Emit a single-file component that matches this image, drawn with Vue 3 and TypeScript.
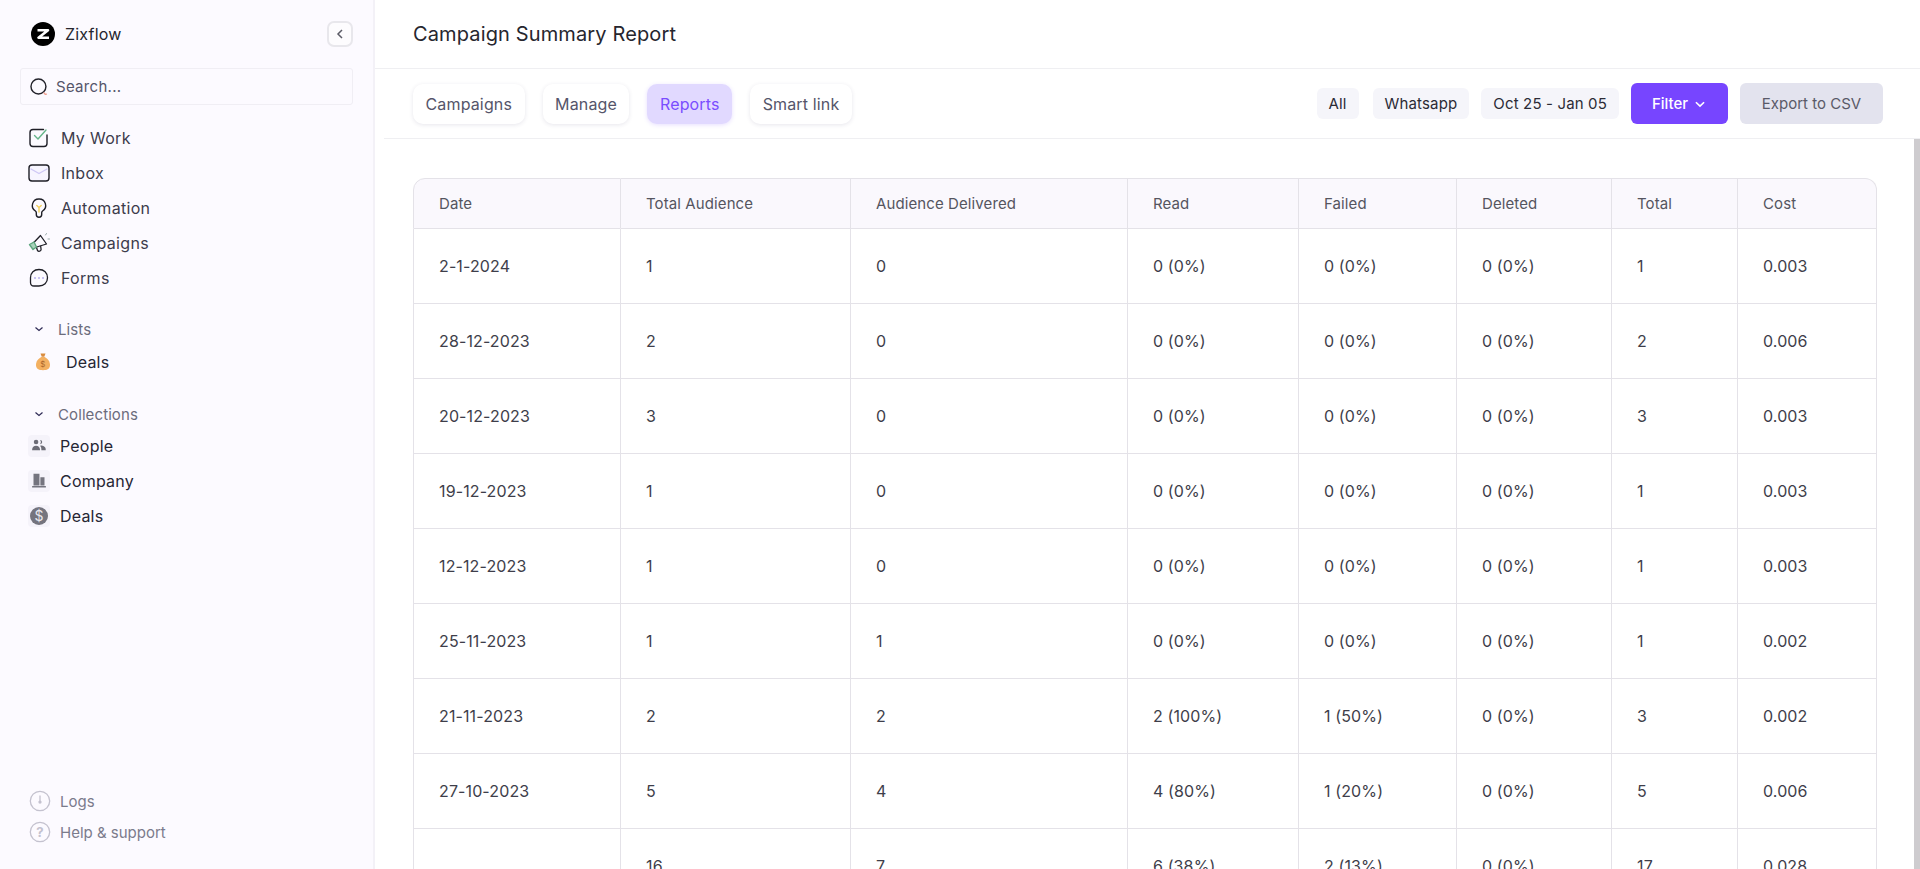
<script setup lang="ts">
interface Shape { d: string; stroke?: string; fill?: string; w?: number }
interface Item { label: string; icon: Shape[] }

const K = '#1f1f27'
const topNav: Item[] = [
  { label: 'My Work', icon: [
    { d: 'M16.500 3.500H6a3 3 0 0 0-3 3v11a3 3 0 0 0 3 3h11a3 3 0 0 0 3-3V9', stroke: K, w: 1.4 },
    { d: 'M7.500 9.500l3.500 3.500 8-9', stroke: '#66b58a', w: 1.4 }
  ] },
  { label: 'Inbox', icon: [
    { d: 'M5 4h14a3 3 0 0 1 3 3v10a3 3 0 0 1-3 3H5a3 3 0 0 1-3-3V7a3 3 0 0 1 3-3z', stroke: K, fill: '#f7f5ff', w: 1.4 },
    { d: 'M4 8l8 4.500L20 8', stroke: '#cfc8f5', w: 1.4 }
  ] },
  { label: 'Automation', icon: [
    { d: 'M12 3a6.500 6.500 0 0 0-3.600 12c.6.5.9 1 .9 1.800v1.700a2.700 2.700 0 0 0 5.400 0v-1.700c0-.8.3-1.300.9-1.800A6.500 6.500 0 0 0 12 3z', stroke: K, w: 1.4 },
    { d: 'M9.800 9.500L12 11.500l2.200-2M12 11.500V16', stroke: '#f2cf5b', w: 1.4 }
  ] },
  { label: 'Campaigns', icon: [
    { d: 'M13.500 4.500l6 8.500-13 4-2-3z', stroke: K, w: 1.3 },
    { d: 'M9.500 16.500l1 3a2 2 0 0 0 3.600-1l-.4-3', stroke: K, w: 1.3 },
    { d: 'M2.500 13.500l4.500-2.500 2.500 5-3.500 2.500z', stroke: '#5fa67f', fill: '#a8d3bb', w: 1.4 },
    { d: 'M18.500 4l1-1.500M21 8h1.500', stroke: '#9aa', w: 1 }
  ] },
  { label: 'Forms', icon: [
    { d: 'M12 3.500c5 0 8.500 3.400 8.500 8.200 0 4.900-3.500 8.300-8.500 8.300H7c-2 0-3.500-1.400-3.500-3.500v-4.800c0-4.800 3.500-8.200 8.500-8.200z', stroke: K, w: 1.3 },
    { d: 'M8 12h.01M12 12h.01M16 12h.01', stroke: '#b9b2ee', w: 2 }
  ] }
]

const collections: Item[] = [
  { label: 'People', icon: [
    { d: 'M6.300 7.700a2.500 2.500 0 1 0 5 0 2.500 2.500 0 0 0-5 0zM13.200 5.400a2.300 2.300 0 1 1 0 4.600 3.500 3.500 0 0 0 0-4.600zM4.500 16c0-2.700 2-4.300 4.300-4.300s4.300 1.600 4.300 4.300v.5h-8.600zM14.200 11.500c2.300 0 5.100 1.300 5.100 4v1h-4.700c0-2-.1-3.700-1.500-4.900z', fill: '#6c6c76' }
  ] },
  { label: 'Company', icon: [
    { d: 'M6 4h6.500v13H6zM13.500 8H18v9h-4.500zM4.500 17.500h15v1.500h-15z', fill: '#74747e' }
  ] },
  { label: 'Deals', icon: [] }
]

const columns = ['Date', 'Total Audience', 'Audience Delivered', 'Read', 'Failed', 'Deleted', 'Total', 'Cost']
const rows: string[][] = [
  ['2-1-2024', '1', '0', '0 (0%)', '0 (0%)', '0 (0%)', '1', '0.003'],
  ['28-12-2023', '2', '0', '0 (0%)', '0 (0%)', '0 (0%)', '2', '0.006'],
  ['20-12-2023', '3', '0', '0 (0%)', '0 (0%)', '0 (0%)', '3', '0.003'],
  ['19-12-2023', '1', '0', '0 (0%)', '0 (0%)', '0 (0%)', '1', '0.003'],
  ['12-12-2023', '1', '0', '0 (0%)', '0 (0%)', '0 (0%)', '1', '0.003'],
  ['25-11-2023', '1', '1', '0 (0%)', '0 (0%)', '0 (0%)', '1', '0.002'],
  ['21-11-2023', '2', '2', '2 (100%)', '1 (50%)', '0 (0%)', '3', '0.002'],
  ['27-10-2023', '5', '4', '4 (80%)', '1 (20%)', '0 (0%)', '5', '0.006'],
  ['', '16', '7', '6 (38%)', '2 (13%)', '0 (0%)', '17', '0.028']
]
const tabs = ['Campaigns', 'Manage', 'Reports', 'Smart link']
const chips = ['All', 'Whatsapp', 'Oct 25 - Jan 05']
</script>

<template>
  <div class="app">
    <aside class="sidebar">
      <div class="brand">
        <svg class="logo" viewBox="0 0 24 24" width="24" height="24">
          <circle cx="12" cy="12" r="12" fill="#000" />
          <path d="M6.500 8.200h10.500l-9.500 7.600H18" fill="none" stroke="#fff" stroke-width="2.600" stroke-linejoin="round" />
        </svg>
        <span class="brand-name">Zixflow</span>
        <button class="collapse" type="button" aria-label="Collapse">
          <svg viewBox="0 0 12 12" width="12" height="12"><path d="M8 2L4 6l4 4" fill="none" stroke="#5b5b66" stroke-width="1.500" /></svg>
        </button>
      </div>

      <div class="search">
        <svg viewBox="0 0 20 20" width="22" height="22">
          <circle cx="9.500" cy="9.500" r="6.800" fill="none" stroke="#23232b" stroke-width="1.300" />
          <path d="M14.500 14.800c.3 1.500 1.500 2.200 2.600 1.500" fill="none" stroke="#f0a090" stroke-width="1.300" />
        </svg>
        <span>Search...</span>
      </div>

      <nav class="top-nav">
        <a v-for="item in topNav" :key="item.label" class="nav-item">
          <svg viewBox="0 0 24 24" width="24" height="24">
            <path v-for="(s, i) in item.icon" :key="i" :d="s.d" :fill="s.fill || 'none'" :stroke="s.stroke || 'none'" :stroke-width="s.w || 1" stroke-linecap="round" stroke-linejoin="round" />
          </svg>
          <span>{{ item.label }}</span>
        </a>
      </nav>

      <div class="section-head first">
        <svg viewBox="0 0 12 12" width="12" height="12"><path d="M2.500 4.500L6 7.500l3.500-3" fill="none" stroke="#2e2a55" stroke-width="1.200" /></svg>
        <span>Lists</span>
      </div>
      <a class="list-item">
        <svg viewBox="0 0 20 20" width="20" height="20">
          <path d="M7.500 1.500h5l-1.200 3.200H8.700z" fill="#d98c3f" />
          <path d="M8.300 5c-3 1.500-5.300 4.600-5.300 8 0 3.600 2.500 5.200 7 5.200s7-1.600 7-5.200c0-3.400-2.300-6.500-5.300-8z" fill="#f3b061" />
          <text x="10" y="15" text-anchor="middle" font-size="8" font-family="Inter, sans-serif" fill="#a8642a">$</text>
        </svg>
        <span>Deals</span>
      </a>

      <div class="section-head second">
        <svg viewBox="0 0 12 12" width="12" height="12"><path d="M2.500 4.500L6 7.500l3.500-3" fill="none" stroke="#2e2a55" stroke-width="1.200" /></svg>
        <span>Collections</span>
      </div>
      <nav class="collections">
        <a v-for="item in collections" :key="item.label" class="collection-item">
          <span class="tile">
            <svg v-if="item.icon.length" viewBox="0 0 24 24" width="22" height="22">
              <path v-for="(s, i) in item.icon" :key="i" :d="s.d" :fill="s.fill" />
            </svg>
            <svg v-else viewBox="0 0 20 20" width="20" height="20">
              <circle cx="10" cy="10" r="9" fill="#74747e" />
              <text x="10" y="15" text-anchor="middle" font-size="14" font-family="Inter, sans-serif" fill="#e8e8ee">$</text>
            </svg>
          </span>
          <span>{{ item.label }}</span>
        </a>
      </nav>

      <div class="foot">
        <a class="foot-item">
          <svg viewBox="0 0 20 20" width="22" height="22">
            <circle cx="10" cy="10" r="8.800" fill="none" stroke="#c4c2cf" stroke-width="1.200" />
            <path d="M10 5v5" stroke="#c4c2cf" stroke-width="1.200" />
            <circle cx="10" cy="11" r="1.500" fill="#c4c2cf" />
          </svg>
          <span>Logs</span>
        </a>
        <a class="foot-item">
          <svg viewBox="0 0 20 20" width="22" height="22">
            <circle cx="10" cy="10" r="8.800" fill="none" stroke="#c4c2cf" stroke-width="1.200" />
            <text x="10" y="14.500" text-anchor="middle" font-size="12" font-weight="700" font-family="Inter, sans-serif" fill="#c4c2cf">?</text>
          </svg>
          <span>Help &amp; support</span>
        </a>
      </div>
    </aside>

    <main class="main">
      <header class="title-bar"><h1>Campaign Summary Report</h1></header>
      <div class="toolbar">
        <div class="tabs">
          <button v-for="t in tabs" :key="t" type="button" class="tab" :class="{ active: t === 'Reports' }">{{ t }}</button>
        </div>
        <div class="actions">
          <span v-for="c in chips" :key="c" class="chip">{{ c }}</span>
          <button type="button" class="filter">
            Filter
            <svg viewBox="0 0 12 12" width="14" height="14"><path d="M2.500 4.500L6 7.800l3.500-3.300" fill="none" stroke="#fff" stroke-width="1.400" /></svg>
          </button>
          <button type="button" class="export">Export to CSV</button>
        </div>
      </div>
      <div class="scroll-wrap">
        <div class="scroll">
          <table class="report">
            <colgroup>
              <col class="c1" /><col class="c2" /><col class="c3" /><col class="c4" />
              <col class="c5" /><col class="c6" /><col class="c7" /><col class="c8" />
            </colgroup>
            <thead>
              <tr><th v-for="c in columns" :key="c">{{ c }}</th></tr>
            </thead>
            <tbody>
              <tr v-for="(r, i) in rows" :key="i">
                <td v-for="(v, j) in r" :key="j">{{ v }}</td>
              </tr>
            </tbody>
          </table>
        </div>
        <div class="scroll-thumb"></div>
      </div>
    </main>
  </div>
</template>

<style>
html, body { margin: 0; height: 100%; overflow: hidden; background: #fff; }
</style>

<style scoped>
.app {
  display: flex;
  height: 869px;
  overflow: hidden;
  font-family: Inter, "Liberation Sans", sans-serif;
  color: #2c2c38;
}
.sidebar {
  width: 375px;
  flex: none;
  box-sizing: border-box;
  display: flex;
  flex-direction: column;
  padding: 0 20px 0 20px;
  background: #fcfaff;
  border-right: 2px solid #f3f1f7;
}
.brand {
  height: 68px;
  display: flex;
  align-items: center;
  padding-left: 11px;
}
.logo { flex: none; }
.brand-name {
  margin-left: 10px;
  font-size: 16px;
  letter-spacing: 0.2px;
  color: #26262e;
}
.collapse {
  margin-left: auto;
  width: 26px;
  height: 26px;
  padding: 0;
  display: flex;
  align-items: center;
  justify-content: center;
  background: #fdfcfe;
  border: 2px solid #e8e7ec;
  border-radius: 7px;
}
.search {
  height: 37px;
  box-sizing: border-box;
  display: flex;
  align-items: center;
  gap: 6px;
  padding-left: 7px;
  border: 1px solid #f0eef4;
  border-radius: 3px;
  font-size: 15px;
  letter-spacing: 0.3px;
  color: #55556a;
}
.top-nav {
  display: flex;
  flex-direction: column;
  margin-top: 15px;
}
.nav-item {
  height: 35px;
  display: flex;
  align-items: center;
  gap: 10px;
  padding-left: 7px;
  font-size: 16px;
  letter-spacing: 0.3px;
  color: #3c3c4c;
}
.section-head {
  height: 20px;
  display: flex;
  align-items: center;
  gap: 13px;
  padding-left: 13px;
  font-size: 15px;
  letter-spacing: 0.1px;
  color: #6c6c7c;
}
.section-head.first { margin-top: 24px; }
.section-head.second { margin-top: 25px; }
.list-item {
  height: 35px;
  margin-top: 5px;
  display: flex;
  align-items: center;
  gap: 13px;
  padding-left: 13px;
  font-size: 16px;
  letter-spacing: 0.2px;
  color: #262634;
}
.collections {
  display: flex;
  flex-direction: column;
  margin-top: 4px;
}
.collection-item {
  height: 35px;
  display: flex;
  align-items: center;
  gap: 10px;
  padding-left: 8px;
  font-size: 16px;
  letter-spacing: 0.2px;
  color: #262634;
}
.tile {
  width: 22px;
  height: 22px;
  display: flex;
  align-items: center;
  justify-content: center;
  background: #f5f3fa;
  border-radius: 4px;
}
.foot {
  margin-top: auto;
  padding-bottom: 27px;
  display: flex;
  flex-direction: column;
  gap: 11px;
}
.foot-item {
  height: 20px;
  display: flex;
  align-items: center;
  gap: 9px;
  padding-left: 9px;
  font-size: 15px;
  color: #7b7b8c;
}
.main {
  flex: 1;
  min-width: 0;
  display: flex;
  flex-direction: column;
  background: #fff;
}
.title-bar {
  height: 69px;
  flex: none;
  box-sizing: border-box;
  display: flex;
  align-items: center;
  padding-left: 38px;
  border-bottom: 1px solid #efeff2;
}
h1 {
  margin: 0;
  font-size: 20px;
  font-weight: 400;
  letter-spacing: 0.13px;
  color: #26262e;
}
.toolbar {
  height: 70px;
  flex: none;
  box-sizing: border-box;
  display: flex;
  align-items: center;
  justify-content: space-between;
  margin-left: 9px;
  padding: 0 37px 0 29px;
  border-bottom: 1px solid #efeff2;
}
.tabs { display: flex; gap: 18px; }
.tab {
  height: 40px;
  padding: 0 12.5px;
  background: #fff;
  border: 0;
  border-radius: 10px;
  box-shadow: 0 1px 4px rgba(60, 50, 100, 0.12);
  font: 16px Inter, "Liberation Sans", sans-serif;
  letter-spacing: 0.15px;
  color: #55556a;
}
.tab.active {
  background: #e1d9ff;
  color: #7a4dff;
  box-shadow: 0 1px 4px rgba(120, 80, 255, 0.18);
}
.actions { display: flex; align-items: center; gap: 12px; }
.chip {
  height: 31px;
  display: flex;
  align-items: center;
  padding: 0 12px;
  background: #f5f5fa;
  border-radius: 6px;
  font-size: 15px;
  letter-spacing: 0.15px;
  color: #2b2b36;
}
.chip:first-child { margin-right: 2px; }
.filter {
  height: 41px;
  width: 97px;
  display: flex;
  align-items: center;
  justify-content: center;
  gap: 5px;
  padding: 0;
  background: #7745ff;
  border: 0;
  border-radius: 6px;
  font: 500 15px Inter, "Liberation Sans", sans-serif;
  color: #fff;
}
.export {
  height: 41px;
  width: 143px;
  padding: 0;
  background: #e3e3ee;
  border: 0;
  border-radius: 6px;
  font: 15px Inter, "Liberation Sans", sans-serif;
  color: #5a5a68;
}
.scroll-wrap {
  position: relative;
  flex: 1;
  min-height: 0;
}
.scroll {
  height: 100%;
  box-sizing: border-box;
  overflow: hidden;
  padding: 39px 0 0 38px;
}
.scroll-thumb {
  position: absolute;
  top: 0;
  right: 0;
  bottom: 0;
  width: 6px;
  background: #cecccf;
}
.report {
  table-layout: fixed;
  width: 1464px;
  border-collapse: separate;
  border-spacing: 0;
}
.c1 { width: 208px; }
.c2 { width: 230px; }
.c3 { width: 277px; }
.c4 { width: 171px; }
.c5 { width: 158px; }
.c6 { width: 155px; }
.c7 { width: 126px; }
.c8 { width: 139px; }
th, td {
  box-sizing: border-box;
  text-align: left;
  padding: 0 0 0 25px;
  border-right: 1px solid #e4e2e8;
  border-bottom: 1px solid #e4e2e8;
}
th:first-child, td:first-child { border-left: 1px solid #e4e2e8; }
th {
  height: 51px;
  font-weight: 400;
  font-size: 15px;
  letter-spacing: 0.1px;
  color: #55555f;
  background: #faf8fd;
  border-top: 1px solid #e4e2e8;
}
th:first-child { border-top-left-radius: 12px; }
th:last-child { border-top-right-radius: 12px; }
td {
  height: 75px;
  color: #3e3e4a;
  font-size: 16px;
  letter-spacing: 0.12px;
}
</style>
